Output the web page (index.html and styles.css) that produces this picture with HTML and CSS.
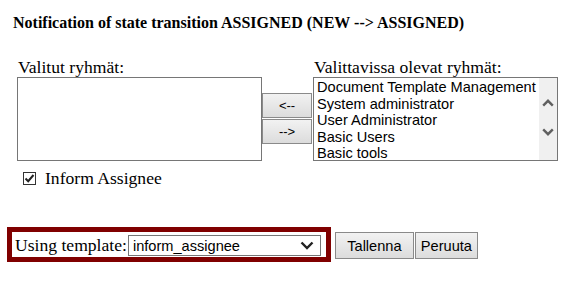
FILE: index.html
```html
<!DOCTYPE html>
<html lang="en">
<head>
    <meta charset="UTF-8">
    <title>Notification</title>
    <link rel="stylesheet" href="styles.css">
</head>
<body>
	<h3 class="title">Notification of state transition ASSIGNED (NEW --&gt; ASSIGNED)</h3>
	<div class="groups">
		<div class="col">
			<div class="lbl">Valitut ryhmät:</div>
			<div class="list"></div>
		</div>
		<div class="moves">
			<button class="btn small">&lt;--</button>
			<button class="btn small">--&gt;</button>
		</div>
		<div class="col">
			<div class="lbl">Valittavissa olevat ryhmät:</div>
			<div class="list">
				<div class="opts">
					<div class="opt">Document Template Management</div>
					<div class="opt">System administrator</div>
					<div class="opt">User Administrator</div>
					<div class="opt">Basic Users</div>
					<div class="opt">Basic tools</div>
				</div>
				<div class="sbar">
					<svg width="12" height="8" viewBox="0 0 12 8"><path d="M1.2 6.6 L6 1.8 L10.8 6.6" fill="none" stroke="#606060" stroke-width="2.4"/></svg>
					<svg width="12" height="8" viewBox="0 0 12 8"><path d="M1.2 1.4 L6 6.2 L10.8 1.4" fill="none" stroke="#606060" stroke-width="2.4"/></svg>
				</div>
			</div>
		</div>
	</div>
	<label class="chk"><span class="box"><svg width="11" height="11" viewBox="0 0 11 11"><path d="M1.5 5.5 L4.2 8.2 L9.5 2" fill="none" stroke="#222" stroke-width="2"/></svg></span>Inform Assignee</label>
	<div class="bottom">
		<div class="tpl">
			<span>Using template:</span>
			<div class="sel">inform_assignee<svg width="14" height="9" viewBox="0 0 14 9"><path d="M1.5 1.5 L7 7 L12.5 1.5" fill="none" stroke="#222" stroke-width="2.4"/></svg></div>
		</div>
		<button class="btn big save">Tallenna</button>
		<button class="btn big cancel">Peruuta</button>
	</div>
</body>
</html>
```
FILE: styles.css
```css
body{
	margin: 0;
	padding: 14px 0 0 13px;
	font-family: "Liberation Serif", "Times New Roman", serif;
	font-size: 17.6px;
	color: #000;
	background: #fff;
}
.title{
	margin: 0;
	font-size: 16px;
	line-height: 18px;
	font-weight: bold;
}
.groups{
	display: flex;
	align-items: flex-end;
	margin-top: 25px;
	margin-left: 4px;
}
.col{
	display: flex;
	flex-direction: column;
}
.lbl{
	line-height: 20px;
	margin-left: 1px;
}
.list{
	display: flex;
	width: 243px;
	height: 82px;
	border: 1px solid #767676;
	background: #fff;
	overflow: hidden;
}
.opts{
	flex: 1;
	padding: 1px 0 0 3px;
	font-family: "Liberation Sans", Arial, sans-serif;
	font-size: 14.6px;
	line-height: 16.5px;
	white-space: nowrap;
}
.sbar{
	width: 18px;
	background: #f0f0f0;
	display: flex;
	flex-direction: column;
	align-items: center;
	justify-content: space-between;
	padding: 21px 0 24px;
}
.moves{
	display: flex;
	flex-direction: column;
	gap: 1px;
	margin: 0 1px 17px 0;
}
.btn{
	font-family: "Liberation Sans", Arial, sans-serif;
	color: #000;
	background: linear-gradient(#f2f2f2, #dcdcdc);
	border: 1px solid #8a8a8a;
	padding: 0;
	margin: 0;
}
.small{
	width: 50px;
	height: 25px;
	font-size: 13px;
}
.chk{
	display: flex;
	align-items: center;
	margin: 6px 0 0 10px;
	line-height: 22px;
}
.box{
	width: 11px;
	height: 11px;
	border: 1px solid #333;
	display: flex;
	margin-right: 9px;
}
.bottom{
	display: flex;
	align-items: flex-start;
	margin: 38px 0 0 -6px;
}
.tpl{
	display: flex;
	align-items: center;
	border: 5px solid #800000;
	padding: 2px 5px 0 3px;
	height: 23px;
	margin-right: 4px;
}
.sel{
	display: flex;
	align-items: center;
	justify-content: space-between;
	width: 181px;
	height: 19px;
	margin-left: 1px;
	padding: 0 6px 0 4px;
	border: 1px solid #767676;
	font-family: "Liberation Sans", Arial, sans-serif;
	font-size: 14.6px;
}
.big{
	height: 27px;
	margin-top: 5px;
	margin-right: 1px;
	font-size: 14.6px;
}
.save{
	width: 79px;
}
.cancel{
	width: 63px;
}
```
